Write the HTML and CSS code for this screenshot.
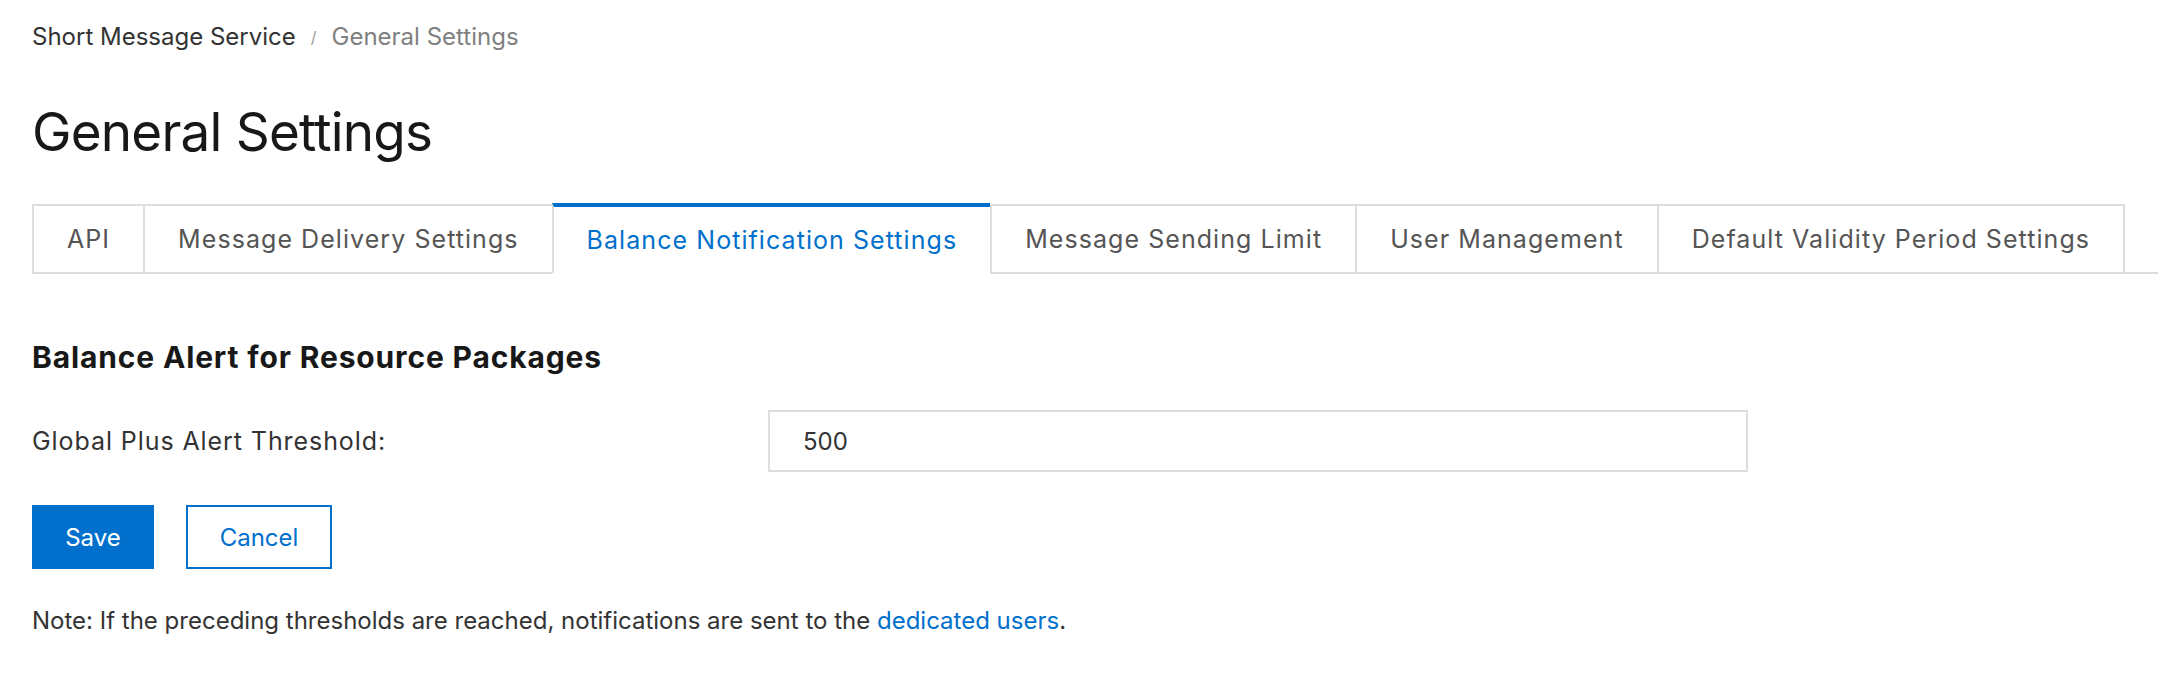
FILE: index.html
```html
<!DOCTYPE html>
<html lang="en">
<head>
<meta charset="utf-8">
<title>General Settings</title>
<link rel="stylesheet" href="styles.css">
</head>
<body>
<div class="page">
  <nav class="breadcrumb">
    <span class="crumb">Short Message Service</span>
    <span class="sep">/</span>
    <span class="crumb current">General Settings</span>
  </nav>
  <h1 class="title">General Settings</h1>
  <div class="tabs">
    <div class="tab">API</div>
    <div class="tab">Message Delivery Settings</div>
    <div class="tab active">Balance Notification Settings</div>
    <div class="tab">Message Sending Limit</div>
    <div class="tab">User Management</div>
    <div class="tab">Default Validity Period Settings</div>
  </div>
  <section class="panel">
    <h2 class="section-title">Balance Alert for Resource Packages</h2>
    <div class="form-row">
      <label class="label" for="threshold">Global Plus Alert Threshold:</label>
      <input class="input" id="threshold" type="text" value="500">
    </div>
    <div class="actions">
      <button class="btn btn-primary">Save</button>
      <button class="btn btn-secondary">Cancel</button>
    </div>
    <p class="note">Note: If the preceding thresholds are reached, notifications are sent to the <a class="link" href="#">dedicated users</a>.</p>
  </section>
</div>
</body>
</html>
```

FILE: styles.css
```css
* { box-sizing: border-box; }
html, body { margin: 0; padding: 0; background: #ffffff; }
body {
  font-family: Inter, Roboto, "Liberation Sans", Arial, sans-serif;
  color: #333333;
}
.page {
  padding: 21px 0 0 32px;
}
.breadcrumb {
  display: flex;
  align-items: center;
  font-size: 24px;
  line-height: 32px;
  height: 32px;
}
.crumb { color: #333333; }
.crumb.current { color: #808080; }
.sep {
  color: #9a9a9a;
  font-size: 16px;
  margin: 0 15px;
}
.title {
  margin: 47px 0 0 0;
  font-size: 53px;
  line-height: 64px;
  font-weight: 400;
  letter-spacing: -0.8px;
  color: #181818;
}
.tabs {
  margin-top: 40px;
  display: flex;
  border-bottom: 2px solid #dedede;
  height: 70px;
}
.tab {
  height: 70px;
  margin-bottom: -2px;
  padding: 0 33px;
  border: 2px solid #dedede;
  border-right: none;
  display: flex;
  align-items: center;
  font-size: 25px;
  letter-spacing: 1.06px;
  color: #555555;
  background: #ffffff;
  white-space: nowrap;
}
.tab:last-child { border-right: 2px solid #dedede; }
.tab.active {
  color: #0070cc;
  border-top: 4px solid #0070cc;
  border-bottom: 2px solid #ffffff;
  margin-top: -1px;
  height: 71px;
}
.panel {
  padding-top: 63px;
}
.section-title {
  margin: 0;
  font-size: 30px;
  line-height: 40px;
  font-weight: 700;
  letter-spacing: 0.85px;
  color: #181818;
}
.form-row {
  margin-top: 33px;
  display: flex;
  align-items: center;
}
.label {
  width: 736px;
  font-size: 25px;
  letter-spacing: 0.92px;
  color: #333333;
}
.input {
  width: 980px;
  height: 62px;
  border: 2px solid #dedede;
  padding: 0 33px;
  font-family: inherit;
  font-size: 24px;
  color: #333333;
  outline: none;
  background: #ffffff;
}
.actions {
  margin-top: 33px;
  display: flex;
  gap: 32px;
}
.btn {
  height: 64px;
  font-family: inherit;
  font-size: 24px;
  padding: 0;
  cursor: pointer;
}
.btn-primary {
  width: 122px;
  background: #0070cc;
  color: #ffffff;
  border: none;
}
.btn-secondary {
  width: 146px;
  background: #ffffff;
  color: #0070cc;
  border: 2px solid #0070cc;
}
.note {
  margin: 36px 0 0 0;
  font-size: 24px;
  line-height: 32px;
  color: #333333;
}
.link {
  color: #0070cc;
  text-decoration: none;
}
```
